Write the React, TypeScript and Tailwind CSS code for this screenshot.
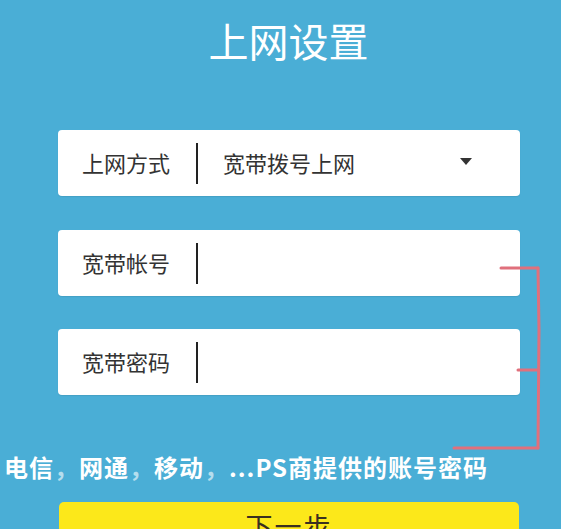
const FONT = { fontFamily: '"Noto Sans CJK SC", "Noto Sans", sans-serif' };

function Field({ label, value, dropdown }: { label: string; value?: string; dropdown?: boolean }) {
  return (
    <div className="flex items-center w-[462px] h-[66px] ml-[58px] bg-white rounded-[4px] shadow-[0_1px_1px_rgba(0,0,0,0.08)]">
      <span className="ml-[24px] w-[92px] text-[22px] leading-none text-[#333] -mt-[2px]">{label}</span>
      <div className="ml-[22px] w-[2px] h-[41px] bg-[#222]" />
      {value && <span className="ml-[25px] text-[22px] leading-none text-[#333] -mt-[2px]">{value}</span>}
      {dropdown && (
        <svg className="ml-auto mr-[48px] -mt-[4px]" width="12" height="7" viewBox="0 0 12 7">
          <polygon points="0,0 12,0 6,7" fill="#333" />
        </svg>
      )}
    </div>
  );
}

export default function App() {
  return (
    <div className="relative w-[561px] h-[529px] overflow-hidden bg-[#4aaed6] flex flex-col" style={FONT}>
      <h1 className="mt-[19px] text-center text-[40px] leading-[42px] text-white font-normal pl-[16px]">上网设置</h1>

      <div className="mt-[69px] flex flex-col gap-[33px]">
        <div className="h-[67px] flex">
          <Field label="上网方式" value="宽带拨号上网" dropdown />
        </div>
        <Field label="宽带帐号" />
        <Field label="宽带密码" />
      </div>

      <p className="mt-[58px] ml-[4px] text-[24px] leading-[28px] font-bold text-white tracking-[1px] whitespace-nowrap">
        电信<span className="text-white/60">，</span>网通<span className="text-white/60">，</span>移动<span className="text-white/60">，</span>...PS商提供的账号密码
      </p>

      <button className="mt-[21px] ml-[59px] w-[460px] h-[60px] shrink-0 bg-[#fce81a] rounded-[5px] flex justify-center pt-[10px]">
        <span className="text-[27px] leading-none text-[#3a3020] tracking-[2px]">下一步</span>
      </button>

      {/* red bracket drawn on top */}
      <svg className="absolute left-0 top-0 pointer-events-none" width="561" height="529">
        <g stroke="#e0707c" strokeWidth="3" fill="none" strokeLinecap="round">
          <path d="M501 268 L538 268" />
          <path d="M518 370 L538 370" />
          <path d="M538 268 L539 330 L538 448" />
          <path d="M454 448 L538 448" />
        </g>
      </svg>
    </div>
  );
}
